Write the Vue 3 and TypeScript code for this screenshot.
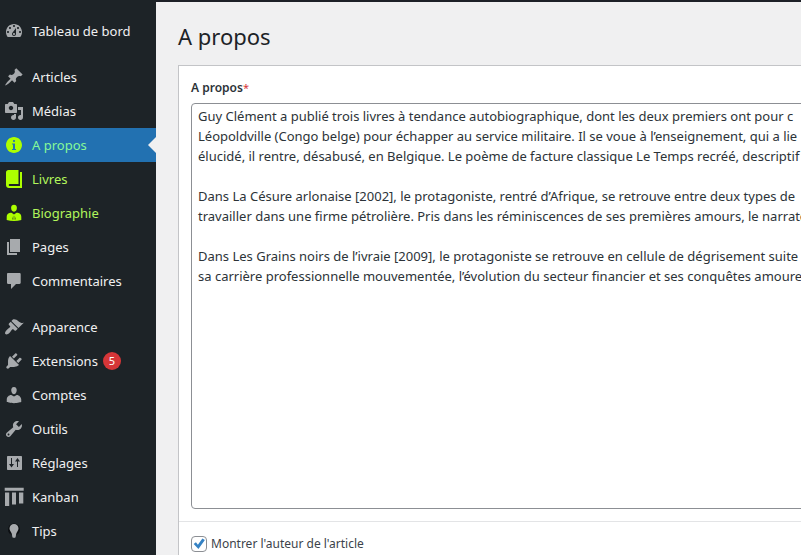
<script setup lang="ts">
import { ref } from 'vue'

interface MenuItem {
  label: string
  icon: string
  active?: boolean
  accent?: boolean
  count?: number
}

const icons: Record<string, string> = {
  dashboard:
    'M3.76 16h12.48c1.1-1.37 1.76-3.11 1.76-5 0-4.42-3.58-8-8-8s-8 3.58-8 8c0 1.89.66 3.63 1.76 5zM10 4c.55 0 1 .45 1 1s-.45 1-1 1-1-.45-1-1 .45-1 1-1zM6 6c.55 0 1 .45 1 1s-.45 1-1 1-1-.45-1-1 .45-1 1-1zm8 0c.55 0 1 .45 1 1s-.45 1-1 1-1-.45-1-1 .45-1 1-1zm-5.37 5.55L12 7v6c0 1.1-.9 2-2 2s-2-.9-2-2c0-.57.24-1.08.63-1.45zM4 10c.55 0 1 .45 1 1s-.45 1-1 1-1-.45-1-1 .45-1 1-1zm12 0c.55 0 1 .45 1 1s-.45 1-1 1-1-.45-1-1 .45-1 1-1zm-5 3c0-.55-.45-1-1-1s-1 .45-1 1 .45 1 1 1 1-.45 1-1z',
  pin: 'M10.44 3.02l1.82-1.82 6.36 6.35-1.83 1.82c-1.05-.68-2.48-.57-3.41.36l-.75.75c-.92.93-1.04 2.35-.35 3.41l-1.83 1.82-2.41-2.41-2.8 2.79c-.42.42-3.38 2.71-3.8 2.29s1.86-3.39 2.28-3.81l2.79-2.79L4.1 9.36l1.83-1.82c1.05.69 2.48.57 3.4-.36l.75-.75c.93-.92 1.05-2.35.36-3.41z',
  media:
    'M13 11V4c0-.55-.45-1-1-1h-1.67L9 1H5L3.67 3H2c-.55 0-1 .45-1 1v7c0 .55.45 1 1 1h10c.55 0 1-.45 1-1zM7 4.8c1.2 0 2.2 1 2.2 2.2S8.2 9.2 7 9.2 4.8 8.200 4.8 7 5.800 4.8 7 4.8zM14 6h5v10.5c0 1.38-1.12 2.5-2.5 2.5S14 17.88 14 16.5s1.12-2.5 2.5-2.5c.17 0 .34.02.5.05V9h-3V6zm-4 8.05V13h2v3.5c0 1.38-1.12 2.5-2.5 2.5S7 17.88 7 16.5 8.12 14 9.5 14c.17 0 .34.02.5.05z',
  info: 'M10 2c4.42 0 8 3.58 8 8s-3.58 8-8 8-8-3.58-8-8 3.58-8 8-8zm1 4c0-.55-.45-1-1-1s-1 .45-1 1 .45 1 1 1 1-.45 1-1zm0 9V8.500H8v1h1V14H8v1h4v-1h-1z',
  book: 'M4.500 1h10v14h-9c-1 0-1 2 0 2H16V3h2v16H5c-1.700 0-3-1.300-3-3V3.500C2 2 3 1 4.500 1z',
  businessman:
    'M10 8.700c-2 0-2.900-2-2.900-3.900C7.100 2.900 8.200 1.700 10 1.700s2.900 1.200 2.900 3.100c0 1.900-.9 3.900-2.900 3.900zM6.300 9.800h1.200L10 11.400l2.500-1.600h1.200c2.200.3 3.600 2 3.600 4v3.300c-2.200.7-4.700 1-7.300 1s-5.100-.3-7.300-1v-3.300c0-2 1.400-3.700 3.600-4zM9.200 12.600L8.400 16.300 9.300 16.800zM10.800 12.600l-.1 4.200.9-.5z',
  pages: 'M6 15V2h10v13H6zm-1 1h8v2H3V5h2v11z',
  comments:
    'M4 2h11.500c.7 0 1.200.5 1.200 1.200v8.600c0 .7-.5 1.200-1.200 1.200H12l-5 5v-5H4c-.6 0-1-.5-1-1.200V3.200C3 2.500 3.400 2 4 2z',
  appearance:
    'M14.48 11.06L7.41 3.99l1.5-1.5c.5-.56 2.3-.47 3.51.32 1.21.8 1.43 1.28 2.91 2.1 1.18.64 2.45 1.26 4.45.85zm-.71.71L6.7 4.7 4.93 6.47c-.39.39-.39 1.02 0 1.41l1.06 1.06c.39.39.39 1.03 0 1.42-.6.6-1.43 1.11-2.21 1.69-.35.26-.7.53-1.01.84C1.43 14.23.4 16.08 1.4 17.07c.99 1 2.84-.03 4.18-1.36.31-.31.58-.66.85-1.02.57-.78 1.08-1.61 1.69-2.21.39-.39 1.02-.39 1.41 0l1.06 1.06c.39.39 1.02.39 1.41 0z',
  plugins:
    'M13.11 4.36L9.87 7.6 8 5.73l3.24-3.24c.35-.34 1.05-.2 1.56.32.52.51.66 1.21.31 1.55zm-8 1.77l.91-1.12 9.01 9.01-1.19.84c-.71.71-2.63 1.16-3.82 1.16H6.14L4.9 17.26c-.59.59-1.54.59-2.12 0-.59-.58-.59-1.53 0-2.12l1.24-1.24v-3.88c0-1.13.4-3.19 1.09-3.89zm7.26 3.97l3.24-3.24c.34-.35 1.04-.21 1.55.31.52.51.66 1.21.31 1.55l-3.24 3.25z',
  users:
    'M10 9.25c-2.27 0-2.73-3.44-2.73-3.44C7 4.02 7.82 2 9.97 2c2.16 0 2.98 2.02 2.71 3.81 0 0-.41 3.44-2.68 3.44zM7.230 10.020L10 11.500 12.720 10c2.39 0 4.52 2.33 4.52 4.53v2.49s-3.65 1.13-7.24 1.13c-3.65 0-7.24-1.13-7.24-1.13v-2.49c0-2.25 1.94-4.48 4.47-4.48z',
  tools:
    'M16.68 9.77c-1.34 1.34-3.3 1.67-4.95.99l-5.41 6.52c-.99.99-2.59.99-3.58 0s-.99-2.59 0-3.57l6.52-5.42c-.68-1.65-.35-3.61.99-4.95 1.28-1.28 3.12-1.62 4.72-1.06l-2.89 2.89 2.82 2.82 2.86-2.87c.53 1.58.18 3.39-1.08 4.65zM3.81 16.21c.4.39 1.04.39 1.43 0 .4-.4.4-1.04 0-1.43-.39-.4-1.03-.4-1.43 0-.39.39-.39 1.03 0 1.43z',
  settings:
    'M4 3h13c.6 0 1 .4 1 1v12c0 .6-.4 1-1 1H4c-.6 0-1-.4-1-1V4c0-.6.4-1 1-1zM7 5v6H5l2.500 3.500L10 11H8V5zM13.500 5L11 8.500h2V14h1V8.500h2z',
  kanban: 'M.7.8h19v3h-19zM1 5.500h4.200V19H1zM8 5.500h4v12H8zM15 5.500h4.300v11H15z',
}

const groups: MenuItem[][] = [
  [{ label: 'Tableau de bord', icon: 'dashboard' }],
  [
    { label: 'Articles', icon: 'pin' },
    { label: 'Médias', icon: 'media' },
    { label: 'A propos', icon: 'info', active: true, accent: true },
    { label: 'Livres', icon: 'book', accent: true },
    { label: 'Biographie', icon: 'businessman', accent: true },
    { label: 'Pages', icon: 'pages' },
    { label: 'Commentaires', icon: 'comments' },
  ],
  [
    { label: 'Apparence', icon: 'appearance' },
    { label: 'Extensions', icon: 'plugins', count: 5 },
    { label: 'Comptes', icon: 'users' },
    { label: 'Outils', icon: 'tools' },
    { label: 'Réglages', icon: 'settings' },
    { label: 'Kanban', icon: 'kanban' },
    { label: 'Tips', icon: 'tips' },
  ],
]

const about = ref<string>(
  [
    'Guy Clément a publié trois livres à tendance autobiographique, dont les deux premiers ont pour c',
    'Léopoldville (Congo belge) pour échapper au service militaire. Il se voue à l’enseignement, qui a lie',
    'élucidé, il rentre, désabusé, en Belgique. Le poème de facture classique Le Temps recréé, descriptif',
    '',
    'Dans La Césure arlonaise [2002], le protagoniste, rentré d’Afrique, se retrouve entre deux types de',
    'travailler dans une firme pétrolière. Pris dans les réminiscences de ses premières amours, le narrate',
    '',
    'Dans Les Grains noirs de l’ivraie [2009], le protagoniste se retrouve en cellule de dégrisement suite',
    'sa carrière professionnelle mouvementée, l’évolution du secteur financier et ses conquêtes amoure',
  ].join('\n'),
)
const showAuthor = ref<boolean>(true)
</script>

<template>
  <div class="admin">
    <nav class="sidebar">
      <ul v-for="(group, g) in groups" :key="g" class="group">
        <li v-for="item in group" :key="item.label">
          <a href="#" class="item" :class="{ active: item.active, accent: item.accent }">
            <svg class="icon" viewBox="0 0 20 20" aria-hidden="true">
              <template v-if="item.icon === 'tips'">
                <circle cx="10" cy="8.500" r="6" fill="#0c0f12" />
                <path d="M10 3a4.500 4.500 0 0 1 4.500 4.500c0 2-1.500 3.200-2.200 5L11.600 16c-.4 1.200-2.800 1.200-3.200 0l-.7-3.500c-.7-1.800-2.200-3-2.200-5A4.500 4.500 0 0 1 10 3z" />
              </template>
              <path v-else fill-rule="evenodd" :d="icons[item.icon]" />
            </svg>
            <span>{{ item.label }}</span>
            <span v-if="item.count" class="count">{{ item.count }}</span>
          </a>
        </li>
      </ul>
    </nav>
    <main class="content">
      <h1>A propos</h1>
      <form class="panel" @submit.prevent>
        <div class="field">
          <label class="field-label" for="about">A propos<span class="required">*</span></label>
          <textarea id="about" v-model="about" wrap="off" spellcheck="false"></textarea>
        </div>
        <div class="field toggle">
          <input id="show-author" v-model="showAuthor" type="checkbox" />
          <label for="show-author">Montrer l'auteur de l'article</label>
        </div>
      </form>
    </main>
  </div>
</template>

<style>
body {
  margin: 0;
  overflow: hidden;
  background: #f0f0f1;
}
</style>

<style scoped>
.admin {
  display: flex;
  height: 100vh;
  overflow: hidden;
  font-family: 'Noto Sans', 'Open Sans', sans-serif;
  font-size: 13px;
  line-height: 20px;
  color: #3c434a;
}
.sidebar {
  flex: 0 0 156px;
  box-sizing: border-box;
  padding-top: 14px;
  background: #1d2327;
}
.group {
  list-style: none;
  margin: 0 0 12px;
  padding: 0;
}
.item {
  position: relative;
  display: flex;
  align-items: center;
  height: 34px;
  padding-left: 4px;
  color: #f0f0f1;
  text-decoration: none;
}
.icon {
  width: 20px;
  height: 20px;
  margin-right: 8px;
  fill: #a7aaad;
}
.accent {
  color: #b2f65c;
}
.accent .icon {
  fill: #adff00;
}
.active {
  background: #2271b1;
  color: #86f898;
}
.active::after {
  content: '';
  position: absolute;
  right: 0;
  top: 9px;
  border: 8px solid transparent;
  border-left-width: 0;
  border-right-color: #f0f0f1;
}
.count {
  min-width: 18px;
  height: 18px;
  margin-left: 5px;
  border-radius: 9px;
  background: #d63638;
  color: #fff;
  font-size: 11px;
  line-height: 18px;
  text-align: center;
}
.content {
  flex: 1;
  min-width: 0;
  box-sizing: border-box;
  padding: 19px 0 0 22px;
  border-top: 2px solid #1d2027;
  background: #f0f0f1;
  overflow: hidden;
}
h1 {
  margin: 0 0 14px;
  font-size: 22px;
  font-weight: 400;
  line-height: 30px;
  color: #1d2327;
}
.panel {
  min-height: 500px;
  border: 1px solid #c3c4c7;
  border-right: 0;
  background: #fff;
}
.field {
  padding: 12px 0 12px 12px;
}
.field-label {
  display: block;
  margin-bottom: 5px;
  font-size: 12px;
  font-weight: 600;
  color: #2c3338;
}
.required {
  font-size: 11px;
  font-weight: 400;
  color: #d63638;
}
textarea {
  display: block;
  box-sizing: border-box;
  width: calc(100% + 12px);
  height: 406px;
  padding: 2px 6px;
  border: 1px solid #8c8f94;
  border-radius: 4px;
  background: #fff;
  color: #2c3338;
  font: inherit;
  white-space: pre;
  overflow: hidden;
  resize: none;
}
.toggle {
  display: flex;
  align-items: center;
  gap: 4px;
  border-top: 1px solid #e3e4e6;
  font-size: 12px;
}
input {
  appearance: none;
  box-sizing: border-box;
  width: 16px;
  height: 16px;
  margin: 0;
  border: 1px solid #8c8f94;
  border-radius: 4px;
  background: #fff;
}
input:checked::before {
  content: '';
  display: block;
  width: 14px;
  height: 14px;
  background: #3582c4;
  clip-path: polygon(12% 50%, 28% 38%, 42% 56%, 74% 10%, 92% 22%, 46% 86%);
}
</style>
